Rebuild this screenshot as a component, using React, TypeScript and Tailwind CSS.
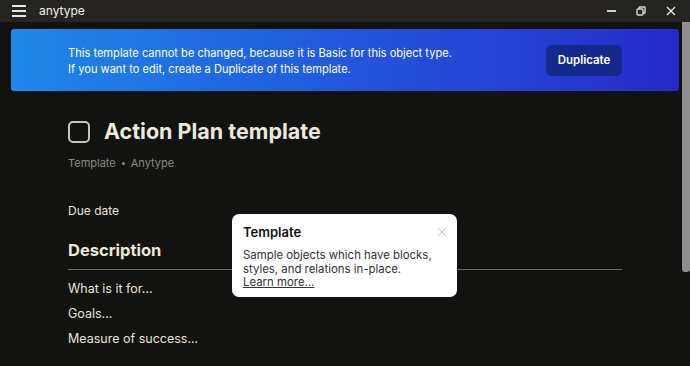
import { X } from "lucide-react";

const font = { fontFamily: "Inter, 'Noto Sans', sans-serif" };

function TitleBar() {
  return (
    <div className="h-[22px] bg-[#252420] flex items-center shrink-0">
      <div className="w-[14px] ml-[12px] flex flex-col gap-[3px]">
        <div className="h-[2px] bg-[#e6e6e6]" />
        <div className="h-[2px] bg-[#e6e6e6]" />
        <div className="h-[2px] bg-[#e6e6e6]" />
      </div>
      <span className="ml-[13px] text-[12px] text-[#f0f0f0] leading-none pb-[1px]">anytype</span>
      <div className="ml-auto flex items-center">
        <div className="w-[30px] h-[22px] flex items-center justify-center">
          <div className="w-[9px] h-[2px] bg-[#cfcfcf]" />
        </div>
        <div className="w-[30px] h-[22px] flex items-center justify-center">
          <svg width="10" height="10" viewBox="0 0 10 10" fill="none" stroke="#d6d6d6" strokeWidth="1.4">
            <rect x="1" y="3" width="6" height="6" rx="1" />
            <path d="M3 3V1.5A.5.5 0 0 1 3.5 1H8.5A.5.5 0 0 1 9 1.5V6.5A.5.5 0 0 1 8.5 7H7" />
          </svg>
        </div>
        <div className="w-[30px] h-[22px] flex items-center justify-center mr-[4px]">
          <svg width="10" height="10" viewBox="0 0 10 10" stroke="#e4e4e4" strokeWidth="1.4">
            <path d="M1 1L9 9M9 1L1 9" />
          </svg>
        </div>
      </div>
    </div>
  );
}

function Banner() {
  return (
    <div className="ml-[11px] mr-[3px] mt-[7px] h-[62px] rounded-[3px] bg-gradient-to-r from-[#1f88e8] via-[#2256dc] to-[#2629c9] flex items-center pl-[57px] pr-[57px]">
      <div className="text-[11.1px] leading-[16px] text-white pt-[2px]">
        <p>This template cannot be changed, because it is Basic for this object type.</p>
        <p>If you want to edit, create a Duplicate of this template.</p>
      </div>
      <button className="ml-auto mt-[1px] w-[76px] h-[31px] rounded-[6px] bg-[#15288c] text-white text-[11.5px] font-semibold">
        Duplicate
      </button>
    </div>
  );
}

export default function App() {
  return (
    <div className="w-[690px] h-[366px] bg-[#121210] flex flex-col overflow-hidden" style={font}>
      <TitleBar />
      <div className="flex flex-1 min-h-0">
        <div className="flex-1 relative">
          <Banner />
          <div className="ml-[68px] w-[554px]">
            <div className="flex items-center mt-[29px] h-[24px]">
              <div className="w-[22px] h-[22px] rounded-[5px] border-2 border-[#c9c5ba]" />
              <h1 className="ml-[14px] text-[21.5px] font-bold text-[#ece8dc] leading-none">Action Plan template</h1>
            </div>
            <div className="flex items-center mt-[12px] text-[11px] text-[#8d8a84] leading-[14px]">
              <span>Template</span>
              <span className="mx-[6px] w-[3px] h-[3px] rounded-full bg-[#8d8a84]" />
              <span>Anytype</span>
            </div>
            <p className="mt-[34px] text-[12px] text-[#e6e3dc] leading-[14px]">Due date</p>
            <h2 className="mt-[22px] text-[16.5px] font-bold text-[#ece8dc] leading-[20px]">Description</h2>
            <div className="mt-[9px] h-[1px] bg-[#6b6a66]" />
            <div className="mt-[11px] flex flex-col gap-[9px] text-[12.5px] text-[#e6e3dc] leading-[16px]">
              <p>What is it for...</p>
              <p>Goals...</p>
              <p>Measure of success...</p>
            </div>
          </div>
          <div className="absolute left-[232px] top-[192px] w-[225px] h-[83px] bg-white rounded-[7px] pl-[11px] pr-[10px] pt-[10px]">
            <div className="flex items-center">
              <span className="text-[13px] font-semibold text-[#111] leading-[16px]">Template</span>
              <X size={16} strokeWidth={1.1} className="ml-auto -mr-[3px] text-[#b5b1a6]" />
            </div>
            <p className="mt-[9px] text-[11.4px] leading-[13.5px] text-[#333]">
              Sample objects which have blocks, styles, and relations in-place.
            </p>
            <p className="text-[11.4px] leading-[13.5px] text-[#333] underline">Learn more...</p>
          </div>
        </div>
        <div className="w-[8px] h-[250px] bg-[#8f8f8f] rounded-b-[3px]" />
      </div>
    </div>
  );
}
